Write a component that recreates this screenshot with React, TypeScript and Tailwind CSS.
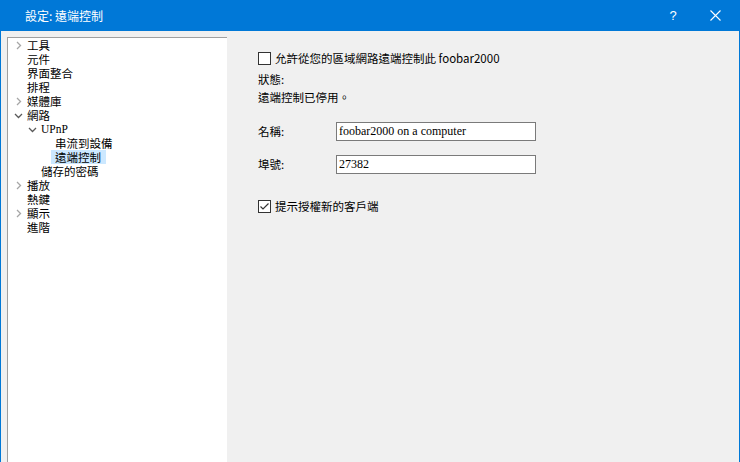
import React from "react";

const cjk = { fontFamily: '"Noto Sans CJK TC", "Noto Sans", sans-serif' };
const serif = { fontFamily: '"Liberation Serif", serif' };

function Chevron({ open }: { open?: boolean }) {
  return open ? (
    <svg width="9" height="9" viewBox="0 0 9 9" className="shrink-0">
      <path d="M1 3 L4.5 6.5 L8 3" fill="none" stroke="#5a5a5a" strokeWidth="1.3" />
    </svg>
  ) : (
    <svg width="9" height="9" viewBox="0 0 9 9" className="shrink-0">
      <path d="M3 1 L6.5 4.5 L3 8" fill="none" stroke="#a6a6a6" strokeWidth="1.3" />
    </svg>
  );
}

type Item = { label: string; level: number; chev?: "open" | "closed"; selected?: boolean; serif?: boolean };

const items: Item[] = [
  { label: "工具", level: 0, chev: "closed" },
  { label: "元件", level: 0 },
  { label: "界面整合", level: 0 },
  { label: "排程", level: 0 },
  { label: "媒體庫", level: 0, chev: "closed" },
  { label: "網路", level: 0, chev: "open" },
  { label: "UPnP", level: 1, chev: "open", serif: true },
  { label: "串流到設備", level: 2 },
  { label: "遠端控制", level: 2, selected: true },
  { label: "儲存的密碼", level: 1 },
  { label: "播放", level: 0, chev: "closed" },
  { label: "熱鍵", level: 0 },
  { label: "顯示", level: 0, chev: "closed" },
  { label: "進階", level: 0 },
];

function Checkbox({ checked }: { checked?: boolean }) {
  return (
    <div className="w-[13px] h-[13px] border border-[#333] bg-white flex items-center justify-center shrink-0">
      {checked && (
        <svg width="11" height="11" viewBox="0 0 11 11">
          <path d="M1.5 5.5 L4 8 L9.5 2.5" fill="none" stroke="#333" strokeWidth="1.2" />
        </svg>
      )}
    </div>
  );
}

export default function App() {
  return (
    <div className="w-[740px] h-[462px] flex flex-col bg-[#0078d7] overflow-hidden" style={cjk}>
      <div className="h-[31px] flex items-center text-white text-[12px] leading-[16px] shrink-0">
        <div className="pl-[25px] flex-1 pt-[1px]">設定: 遠端控制</div>
        <div className="w-[20px] text-center mr-[27px] text-[13px]" style={{ fontFamily: '"Liberation Sans", sans-serif' }}>?</div>
        <svg width="11" height="11" viewBox="0 0 11 11" className="mr-[19px]">
          <path d="M0.5 0.5 L10.5 10.5 M10.5 0.5 L0.5 10.5" stroke="white" strokeWidth="1.1" />
        </svg>
      </div>
      <div className="flex-1 mx-[1px] bg-[#f0f0f0] flex pt-[6px] pl-[6px]">
        <div className="w-[220px] bg-white border-t border-l border-[#a0a0a0] text-[11.5px] leading-[14px] text-black">
          {items.map((it) => (
            <div key={it.label} className="h-[14px] flex items-center leading-[14px]" style={{ paddingLeft: 6 + it.level * 14 }}>
              <div className="w-[13px] flex items-center">{it.chev && <Chevron open={it.chev === "open"} />}</div>
              <div
                className={`leading-[14px] h-[14px] ${it.selected ? "bg-[#cce8ff] pl-[4px] pr-[5px] -ml-[4px]" : ""}`}
                style={it.serif ? { ...serif, fontSize: 11.5 } : undefined}
              >
                {it.label}
              </div>
            </div>
          ))}
        </div>
        <div className="flex-1 pl-[31px] pt-[14px] text-[11.5px] leading-[15px] text-black">
          <div className="flex items-center gap-[4px] h-[15px]">
            <Checkbox />
            <span>允許從您的區域網路遠端控制此 foobar2000</span>
          </div>
          <div className="mt-[6px] h-[15px]">狀態:</div>
          <div className="mt-[3px] h-[15px]">遠端控制已停用。</div>
          <div className="mt-[17px] flex items-center h-[19px]">
            <span className="w-[78px]">名稱:</span>
            <div className="w-[200px] h-[19px] bg-white border border-[#7a7a7a] pl-[2px] leading-[17px] text-[12px]" style={serif}>
              foobar2000 on a computer
            </div>
          </div>
          <div className="mt-[14px] flex items-center h-[19px]">
            <span className="w-[78px]">埠號:</span>
            <div className="w-[200px] h-[19px] bg-white border border-[#7a7a7a] pl-[2px] leading-[17px] text-[12px]" style={serif}>
              27382
            </div>
          </div>
          <div className="mt-[25px] flex items-center gap-[4px] h-[15px]">
            <Checkbox checked />
            <span>提示授權新的客戶端</span>
          </div>
        </div>
      </div>
    </div>
  );
}
